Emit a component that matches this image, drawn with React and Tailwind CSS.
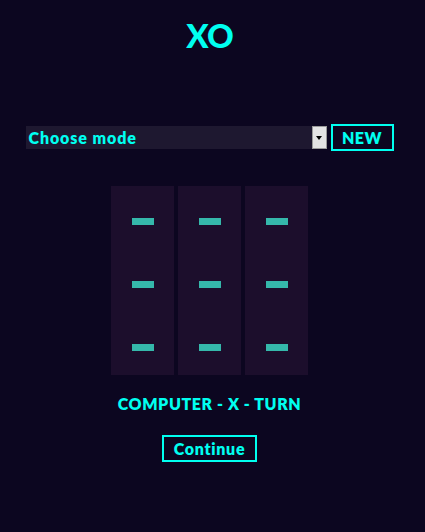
import React from "react";

const App = () => {
  const cells = [0, 1, 2];

  return (
    <div
      className="min-h-[532px] w-[425px] bg-[#0c0620] text-[#00fff0]"
      style={{ fontFamily: "Lato, 'Open Sans', sans-serif" }}
    >
      <div className="w-[419px] flex flex-col items-center">
        <h1 className="mt-[17px] text-[33px] leading-[36px] font-black tracking-tight">XO</h1>

        <div className="mt-[71px] flex items-center gap-[4px]">
          <div className="w-[301px] h-[23px] bg-[#1e1830] flex items-center justify-between">
            <span className="pl-[3px] text-[16px] font-extrabold tracking-[0.9px]">Choose mode</span>
            <span className="w-[15px] h-[23px] bg-[#e4e4e4] border border-[#9a9a9a] flex items-center justify-center">
              <span className="block w-0 h-0 border-l-[3px] border-r-[3px] border-t-[4px] border-l-transparent border-r-transparent border-t-black" />
            </span>
          </div>
          <button className="w-[63px] h-[27px] border-2 border-[#00fff0] text-[16px] font-extrabold leading-none tracking-[0.5px]">
            NEW
          </button>
        </div>

        <div className="mt-[35px] flex gap-[4px]">
          {cells.map((c) => (
            <div key={c} className="w-[63px] h-[189px] bg-[#1c0e2c] flex flex-col">
              {cells.map((r) => (
                <div key={r} className="h-[63px] flex justify-center pt-[32px]">
                  <span className="block w-[22px] h-[7px] bg-[#35b8ab]" />
                </div>
              ))}
            </div>
          ))}
        </div>

        <p className="mt-[17px] text-[16px] font-extrabold tracking-[0.6px]">COMPUTER - X - TURN</p>

        <button className="mt-[19px] w-[95px] h-[27px] border-2 border-[#00fff0] text-[16px] font-extrabold leading-none tracking-[0.7px]">
          Continue
        </button>
      </div>
    </div>
  );
};

export default App;
